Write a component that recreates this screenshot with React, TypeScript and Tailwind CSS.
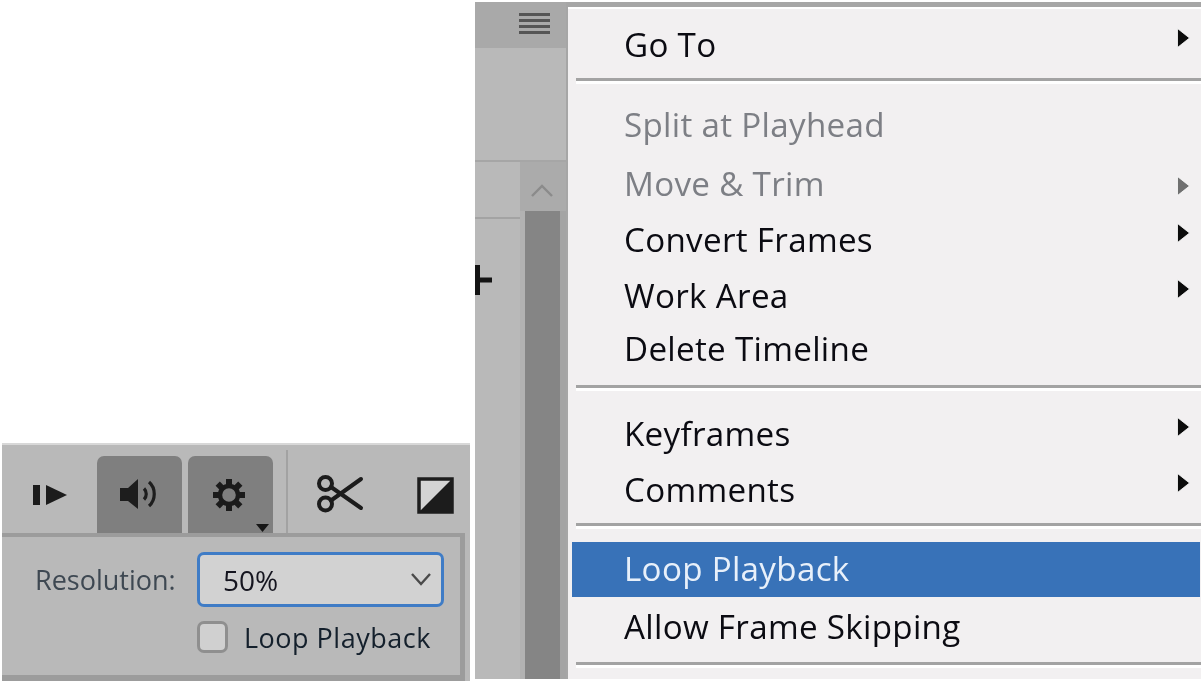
const font = { fontFamily: '"Open Sans", "Noto Sans", sans-serif' };

function Arrow({ muted }: { muted?: boolean }) {
  return (
    <svg
      width="15"
      height="24"
      viewBox="0 0 15 24"
      className={`mr-[10px] shrink-0 ${muted ? "mt-[4px]" : "mb-[14px]"}`}
    >
      <path d="M1.5 2.5 L13.5 12 L1.5 21.5 Z" fill={muted ? "#707070" : "#0c0c0c"} stroke="#ffffff" strokeWidth="0.8" />
    </svg>
  );
}

function Row({ label, h, arrow, muted, active }: { label: string; h: string; arrow?: boolean; muted?: boolean; active?: boolean }) {
  return (
    <div
      className={`${h} flex items-center justify-between pl-[52px] text-[33.2px] tracking-[0.3px] ${
        active ? "mr-[1px] bg-[#3872b8] text-[#e8f0fa]" : muted ? "text-[#7d7f85]" : "text-[#0b0b12]"
      }`}
    >
      <span className="pb-[1px]">{label}</span>
      {arrow && <Arrow muted={muted} />}
    </div>
  );
}

function Sep({ h }: { h: string }) {
  return (
    <div className={`${h} pl-[4px]`}>
      <div className="h-[6px] w-full border-t-[3px] border-[#a3a3a3] bg-[#ffffff]" />
    </div>
  );
}

function StepIcon() {
  return (
    <svg width="36" height="26" viewBox="0 0 36 26" className="shrink-0">
      <rect x="1" y="3" width="7" height="20" fill="#1c1c1c" />
      <path d="M14 3 L35 13 L14 23 Z" fill="#1c1c1c" />
    </svg>
  );
}

function SpeakerIcon() {
  return (
    <svg width="42" height="34" viewBox="0 0 42 34" fill="none">
      <path d="M1 11 H9 L19 2 V32 L9 24 H1 Z" fill="#1d1d1d" />
      <path d="M25 11.5 C28 14.5 28 19.5 25 22.5" stroke="#1d1d1d" strokeWidth="3.2" />
      <path d="M30 5 C37 11 37 23 30 29" stroke="#1d1d1d" strokeWidth="3.2" />
    </svg>
  );
}

function GearIcon() {
  return (
    <svg width="32" height="34" viewBox="0 0 32 34" fill="none">
      <circle cx="16" cy="17" r="9" stroke="#1b1b1b" strokeWidth="4.4" />
      {[0, 45, 90, 135, 180, 225, 270, 315].map((a) => (
        <rect key={a} x="13" y="1" width="6" height="7" fill="#1b1b1b" transform={`rotate(${a} 16 17)`} />
      ))}
    </svg>
  );
}

function ScissorsIcon() {
  return (
    <svg width="48" height="40" viewBox="0 0 48 40" fill="none" stroke="#1c1c1c" strokeWidth="4" strokeLinecap="round">
      <circle cx="9.5" cy="9.5" r="6.5" />
      <circle cx="9.5" cy="30" r="6.5" />
      <path d="M15 13 L45 34" />
      <path d="M15 26.5 L45 5" />
    </svg>
  );
}

function ContrastIcon() {
  return (
    <svg width="37" height="37" viewBox="0 0 37 37">
      <rect x="2" y="2" width="33" height="33" fill="#d4d4d4" stroke="#1c1c1c" strokeWidth="3.5" />
      <path d="M35 2 V35 H2 Z" fill="#1c1c1c" />
    </svg>
  );
}

function LeftPane() {
  return (
    <div className="flex w-[475px] shrink-0 flex-col pl-[2px] pr-[5px] pt-[443px]">
      <div className="flex h-[238px] flex-col border-t-[2px] border-[#d8d8d8] bg-[#b9b9b9]">
        <div className="flex h-[88px] shrink-0 items-end pl-[30px]">
          <div className="mb-[25px] mr-[29px]"><StepIcon /></div>
          <div className="flex h-[77px] w-[85px] items-center justify-center rounded-t-[7px] bg-[#7f7f7f] pb-[2px]">
            <SpeakerIcon />
          </div>
          <div className="relative ml-[6px] flex h-[77px] w-[85px] items-center justify-center rounded-t-[7px] bg-[#7f7f7f] pr-[3px]">
            <GearIcon />
            <svg width="13" height="8" viewBox="0 0 13 8" className="absolute bottom-[1px] right-[4px]">
              <path d="M0 0 H13 L6.5 8 Z" fill="#161616" />
            </svg>
          </div>
          <div className="ml-[13px] h-[83px] w-[2px] bg-[#a2a2a2]" />
          <div className="mb-[19px] ml-[28px]"><ScissorsIcon /></div>
          <div className="mb-[19px] ml-[53px]"><ContrastIcon /></div>
        </div>
        <div className="flex w-[463px] flex-1 flex-col border-b-[6px] border-r-[5px] border-t-[4px] border-[#9c9c9c] bg-[#b9b9b9] pl-[33px] pr-[16px] pt-[15px]">
          <div className="flex items-center justify-between">
            <span className="pt-[2px] text-[27px] text-[#3e4852]">Resolution:</span>
            <div className="flex h-[55px] w-[247px] items-center justify-between rounded-[7px] border-[3px] border-[#3f7cc6] bg-[#d2d2d2] pl-[23px] pr-[9px] text-[28px] text-[#15151f]">
              <span>50%</span>
              <svg width="22" height="15" viewBox="0 0 22 15" fill="none">
                <path d="M2 2 L11 12 L20 2" stroke="#4a4a4a" strokeWidth="2.4" />
              </svg>
            </div>
          </div>
          <div className="ml-[162px] mt-[13px] flex items-center gap-[16px]">
            <div className="h-[32px] w-[31px] rounded-[7px] border-[3px] border-[#8f8f8f] bg-[#d0d0d0]" />
            <span className="pt-[2px] text-[27px] leading-[32px] tracking-[0.5px] text-[#14202c]">Loop Playback</span>
          </div>
        </div>
      </div>
    </div>
  );
}

function MiddleStrip() {
  return (
    <div className="mt-[2px] flex h-[677px] w-[91px] shrink-0 flex-col bg-[#b9b9b9]">
      <div className="flex h-[46px] shrink-0 items-start justify-end bg-[#a9a9a9] pr-[16px] pt-[11px]">
        <div className="flex w-[31px] flex-col gap-[3px]">
          <div className="h-[3px] bg-[#555555]" />
          <div className="h-[3px] bg-[#555555]" />
          <div className="h-[3px] bg-[#555555]" />
          <div className="h-[3px] bg-[#555555]" />
        </div>
      </div>
      <div className="h-[114px] shrink-0 border-b-[2px] border-[#a6a6a6]" />
      <div className="flex flex-1">
        <div className="w-[45px]">
          <div className="h-[57px] border-b-[2px] border-[#a3a3a3]" />
          <svg width="18" height="30" viewBox="0 0 18 30" className="mt-[46px]">
            <path d="M0 0 H5 V30 H0 Z M0 12.5 H17 V17.5 H0 Z" fill="#141414" />
          </svg>
        </div>
        <div className="flex flex-1 flex-col">
          <div className="flex h-[49px] shrink-0 items-center justify-center bg-[#ababab] pr-[2px] pt-[8px]">
            <svg width="24" height="14" viewBox="0 0 24 14" fill="none">
              <path d="M2 12 L12 2 L22 12" stroke="#8b8b8b" strokeWidth="2.4" />
            </svg>
          </div>
          <div className="flex-1 border-l-[5px] border-r-[6px] border-l-[#b2b2b2] border-r-[#a4a4a4] bg-[#858585]" />
        </div>
      </div>
    </div>
  );
}

function Menu() {
  return (
    <div className="mt-[2px] flex h-[677px] flex-1 flex-col overflow-hidden border-l-[2px] border-t-[5px] border-[#a6a6a6] bg-[#f2f0f1] pl-[4px]">
      <div className="-ml-[4px] h-[2px] shrink-0 bg-white" />
      <Row label="Go To" h="h-[56px] mt-[8px]" arrow />
      <Sep h="h-[24px] pt-[5px]" />
      <Row label="Split at Playhead" h="h-[56px]" muted />
      <Row label="Move & Trim" h="h-[56px] mt-[3px]" muted arrow />
      <Row label="Convert Frames" h="h-[56px]" arrow />
      <Row label="Work Area" h="h-[56px]" arrow />
      <Row label="Delete Timeline" h="h-[50px]" />
      <Sep h="h-[32px] pt-[11px]" />
      <Row label="Keyframes" h="h-[56px]" arrow />
      <Row label="Comments" h="h-[56px]" arrow />
      <Sep h="h-[24px] pt-[5px]" />
      <Row label="Loop Playback" h="h-[55px]" active />
      <Row label="Allow Frame Skipping" h="h-[60px]" />
      <Sep h="h-[12px] pt-[5px]" />
    </div>
  );
}

export default function App() {
  return (
    <div className="flex h-[683px] w-[1201px] overflow-hidden bg-white blur-[0.4px]" style={font}>
      <LeftPane />
      <MiddleStrip />
      <Menu />
    </div>
  );
}
